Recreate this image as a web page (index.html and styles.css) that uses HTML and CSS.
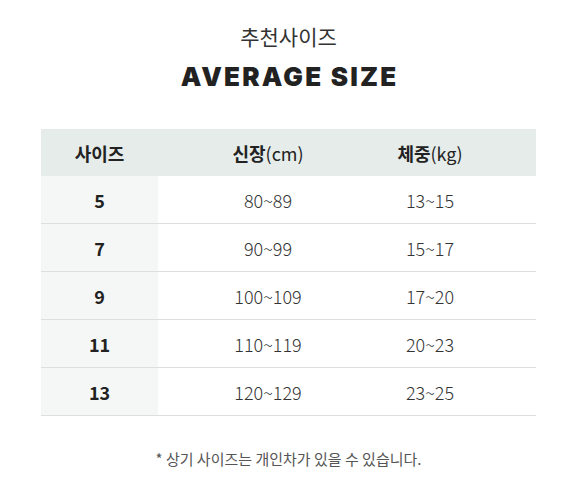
FILE: index.html
```html
<!DOCTYPE html>
<html>
<head>
    <title>추천사이즈</title>
    <link rel="stylesheet" href="styles.css">
</head>
<body>
    <div class="size-guide">
        <p class="subtitle">추천사이즈</p>
        <h1 class="title">AVERAGE SIZE</h1>

        <table class="size-table">
            <thead>
                <tr>
                    <th class="col-size">사이즈</th>
                    <th class="col-height">신장<span>(cm)</span></th>
                    <th class="col-weight">체중<span>(kg)</span></th>
                    <th class="col-rest"></th>
                </tr>
            </thead>
            <tbody>
                <tr><td class="size">5</td><td>80~89</td><td>13~15</td><td></td></tr>
                <tr><td class="size">7</td><td>90~99</td><td>15~17</td><td></td></tr>
                <tr><td class="size">9</td><td>100~109</td><td>17~20</td><td></td></tr>
                <tr><td class="size">11</td><td>110~119</td><td>20~23</td><td></td></tr>
                <tr><td class="size">13</td><td>120~129</td><td>23~25</td><td></td></tr>
            </tbody>
        </table>

        <p class="note">* 상기 사이즈는 개인차가 있을 수 있습니다.</p>
    </div>
</body>
</html>
```

FILE: styles.css
```css
body {
    margin: 0;
    background: #fff;
    color: #222;
    font-family: 'Noto Sans CJK KR', 'Noto Sans', sans-serif;
}

.size-guide {
    width: 495px;
    margin-left: 41px;
    padding-top: 20px;
}

.subtitle {
    margin: 0;
    text-align: center;
    font-size: 21px;
    line-height: 32px;
    color: #333;
}

.title {
    margin: 5px 0 0;
    padding-left: 2px;
    text-align: center;
    font-family: 'Inter', 'Noto Sans', sans-serif;
    font-size: 26px;
    line-height: 40px;
    font-weight: 900;
    letter-spacing: 2.2px;
    color: #222;
}

/* Size table */
.size-table {
    width: 495px;
    margin-top: 32px;
    border-collapse: collapse;
    table-layout: fixed;
}

.size-table th,
.size-table td {
    height: 47px;
    padding: 0;
    text-align: center;
    font-size: 18px;
}

.size-table th {
    background: #e5ecea;
    font-weight: 700;
    color: #222;
}

.size-table th span {
    font-weight: 400;
}

.col-size { width: 117px; }
.col-height { width: 220px; }
.col-weight { width: 104px; }

.size-table td {
    border-bottom: 1px solid #dedede;
    font-weight: 300;
    color: #333;
}

.size-table td.size {
    background: #f5f7f6;
    font-weight: 700;
    color: #222;
}

.note {
    margin: 32px 0 0;
    text-align: center;
    font-size: 15px;
    color: #555;
}
```
